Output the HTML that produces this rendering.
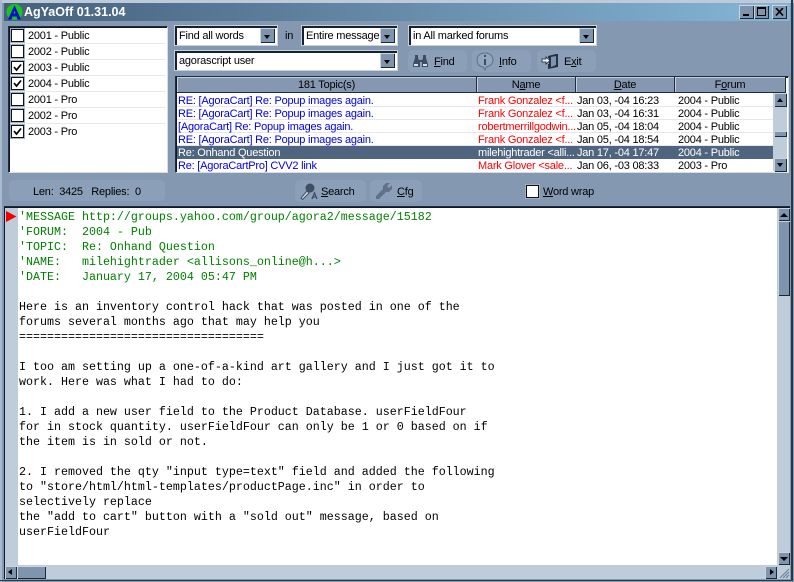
<!DOCTYPE html>
<html><head><meta charset="utf-8">
<style>
html,body{margin:0;padding:0;}
body{width:794px;height:582px;overflow:hidden;position:relative;background:#8499b1;font-family:"Liberation Sans",sans-serif;font-size:11px;letter-spacing:-.22px;color:#000;}
.a{position:absolute;white-space:pre;}
.inset{position:absolute;background:#fff;border:1px solid;border-color:#1f2c3d #d5dde6 #d5dde6 #1f2c3d;box-shadow:inset 1px 1px 0 #10192a;box-sizing:border-box;}
.cb{position:absolute;box-sizing:border-box;width:13px;height:13px;background:#fff;border:1px solid #111;box-shadow:0 0 0 1px #9fb0c4;}
.cb svg{position:absolute;left:1px;top:1px;}
.combo{position:absolute;box-sizing:border-box;background:#fff;border:1px solid #c4d0dc;outline:0;box-shadow:inset 1px 1px 0 #16202e,inset 2px 2px 0 #16202e;}
.combo span{position:absolute;left:4px;top:4px;white-space:pre;}
.arr{position:absolute;right:2px;top:2px;bottom:2px;width:15px;background:#7f94ad;box-shadow:inset 1px 1px 0 #c9d4df,inset -1px -1px 0 #1c2838;}
.arr:after{content:"";position:absolute;left:4px;top:7px;border:3.5px solid transparent;border-top:4px solid #000;border-bottom:0;}
.btn{position:absolute;background:#8ba0b8;border-radius:5px;height:22px;}
.btn .t{position:absolute;top:6px;white-space:pre;}
u{text-decoration:underline;}
.th{position:absolute;top:77px;height:16px;background:#8499b1;box-sizing:border-box;border-right:1px solid #1f2c3d;border-bottom:1px solid #1f2c3d;box-shadow:inset 1px 1px 0 #c4d0dc;text-align:center;line-height:16px;}
.row{position:absolute;left:177px;width:596px;height:13px;line-height:14px;border-bottom:1px solid #e4e8ec;box-sizing:border-box;}
.row span{position:absolute;top:0;white-space:pre;}
.c1{left:1px;color:#0000e0;}
.c2{left:301px;color:#f00;}
.c3{left:400px;}
.c4{left:501px;}
.sel{background:#4f657f;border:0;}
.sel span{color:#fff!important;}
.sb{position:absolute;background:#7f94ad;box-sizing:border-box;box-shadow:inset 1px 1px 0 #c9d4df,inset -1px -1px 0 #1c2838;}
.msg{position:absolute;left:19px;top:210px;font-family:"Liberation Mono",monospace;font-size:11.67px;letter-spacing:0;line-height:15px;white-space:pre;color:#000;}
.g{color:#008000;}
.li{position:absolute;left:10px;width:156px;height:16px;border-bottom:1px solid #e6e9ec;box-sizing:border-box;}
.li span{position:absolute;left:18px;top:2px;}
</style></head><body>

<!-- window frame -->
<div class="a" style="left:0;top:0;width:794px;height:3px;background:#bccad9"></div>
<div class="a" style="left:0;top:0;width:2px;height:582px;background:#a9bace"></div>
<div class="a" style="left:791px;top:0;width:2px;height:581px;background:#2a3848"></div>
<div class="a" style="left:0;top:580px;width:793px;height:1px;background:#2a3848"></div>

<!-- title bar -->
<div class="a" style="left:4px;top:3px;width:786px;height:18px;background:linear-gradient(90deg,#46607c,#85b6d6)"></div>
<svg class="a" style="left:5px;top:3px" width="20" height="18" viewBox="0 0 20 18">
<circle cx="9.5" cy="9" r="8" fill="#17c917"/>
<path d="M3 16.5 L9.5 2 L16 16.5 H12.5 L11.5 13.5 H7.5 L6.5 16.5 Z M8.5 10.500 H10.500 L9.500 7.500 Z" fill="#0a0ad8" fill-rule="evenodd"/>
</svg>
<div class="a" style="left:24px;top:4px;color:#fff;font-weight:bold;font-size:12.5px;line-height:16px;letter-spacing:0">AgYaOff 01.31.04</div>
<div class="sb" style="left:739px;top:5px;width:15px;height:14px"></div>
<div class="a" style="left:743px;top:14px;width:6px;height:2px;background:#000"></div>
<div class="sb" style="left:754px;top:5px;width:15px;height:14px"></div>
<div class="a" style="left:757px;top:7px;width:7px;height:6px;border:1px solid #000;border-top-width:2px"></div>
<div class="sb" style="left:772px;top:5px;width:15px;height:14px"></div>
<svg class="a" style="left:775px;top:8px" width="9" height="8"><path d="M1 0 L8 7.5 M8 0 L1 7.5" stroke="#000" stroke-width="1.6"/></svg>

<!-- forum list -->
<div class="inset" style="left:8px;top:26px;width:160px;height:147px"></div>
<div class="li" style="top:28px"><div class="cb" style="left:1px;top:1px"></div><span>2001 - Public</span></div>
<div class="li" style="top:44px"><div class="cb" style="left:1px;top:1px"></div><span>2002 - Public</span></div>
<div class="li" style="top:60px"><div class="cb" style="left:1px;top:1px"><svg width="9" height="9"><path d="M1 4 L3.500 7 L8 1.500" fill="none" stroke="#000" stroke-width="1.7"/></svg></div><span>2003 - Public</span></div>
<div class="li" style="top:76px"><div class="cb" style="left:1px;top:1px"><svg width="9" height="9"><path d="M1 4 L3.500 7 L8 1.500" fill="none" stroke="#000" stroke-width="1.7"/></svg></div><span>2004 - Public</span></div>
<div class="li" style="top:92px"><div class="cb" style="left:1px;top:1px"></div><span>2001 - Pro</span></div>
<div class="li" style="top:108px"><div class="cb" style="left:1px;top:1px"></div><span>2002 - Pro</span></div>
<div class="li" style="top:124px;border:0"><div class="cb" style="left:1px;top:1px"><svg width="9" height="9"><path d="M1 4 L3.500 7 L8 1.500" fill="none" stroke="#000" stroke-width="1.7"/></svg></div><span>2003 - Pro</span></div>

<!-- combos -->
<div class="combo" style="left:174px;top:25px;width:104px;height:21px"><span>Find all words</span><div class="arr"></div></div>
<div class="a" style="left:285px;top:30px">in</div>
<div class="combo" style="left:301px;top:25px;width:97px;height:21px"><span>Entire message</span><div class="arr"></div></div>
<div class="combo" style="left:408px;top:25px;width:189px;height:21px"><span>in All marked forums</span><div class="arr"></div></div>
<div class="combo" style="left:174px;top:50px;width:224px;height:21px"><span>agorascript user</span><div class="arr"></div></div>

<!-- buttons -->
<div class="btn" style="left:408px;top:50px;width:59px">
<svg class="a" style="left:4px;top:3px" width="17" height="16" viewBox="0 0 17 16"><path d="M3 2h3v3l1 2h3l1-2V2h3v3l2 6v3h-6V9H8v5H1v-3l2-6z" fill="#3f4f63"/><path d="M2 11h4v2H2zM11 11h4v2h-4z" fill="#d6dfe8"/></svg>
<span class="t" style="left:26px"><u>F</u>ind</span></div>
<div class="btn" style="left:472px;top:50px;width:59px">
<svg class="a" style="left:4px;top:2px" width="18" height="19" viewBox="0 0 18 19"><path d="M9 1C4 1 1 4 1 8s3 7 6 7l2 3 1-3c4-1 7-3 7-7s-3-7-8-7z" fill="#92a6bd" stroke="#5d7086"/><path d="M8 3h2v2H8zM8 7h2v6H8z" fill="#3f4f63"/></svg>
<span class="t" style="left:27px"><u>I</u>nfo</span></div>
<div class="btn" style="left:537px;top:50px;width:59px">
<svg class="a" style="left:4px;top:3px" width="18" height="17" viewBox="0 0 18 17"><path d="M7 3L15 1h2v13l-10 2V11h1V5H7z" fill="#26323f"/><path d="M10 4l5-1v9l-5 2z" fill="#7f94ad"/><path d="M1 6h4V4l4 3.500L5 11V9H1z" fill="#eef2f5" stroke="#1a2430" stroke-width=".8"/></svg>
<span class="t" style="left:27px">E<u>x</u>it</span></div>

<!-- topics table -->
<div class="inset" style="left:175px;top:76px;width:614px;height:97px"></div>
<div class="th" style="left:177px;width:300px">181 Topic(s)</div>
<div class="th" style="left:477px;width:99px">N<u>a</u>me</div>
<div class="th" style="left:576px;width:99px"><u>D</u>ate</div>
<div class="th" style="left:675px;width:111px">F<u>o</u>rum</div>

<div class="row" style="top:94px"><span class="c1">RE: [AgoraCart] Re: Popup images again.</span><span class="c2">Frank Gonzalez &lt;f...</span><span class="c3">Jan 03, -04 16:23</span><span class="c4">2004 - Public</span></div>
<div class="row" style="top:107px"><span class="c1">RE: [AgoraCart] Re: Popup images again.</span><span class="c2">Frank Gonzalez &lt;f...</span><span class="c3">Jan 03, -04 16:31</span><span class="c4">2004 - Public</span></div>
<div class="row" style="top:120px"><span class="c1">[AgoraCart] Re: Popup images again.</span><span class="c2">robertmerrillgodwin...</span><span class="c3">Jan 05, -04 18:04</span><span class="c4">2004 - Public</span></div>
<div class="row" style="top:133px"><span class="c1">RE: [AgoraCart] Re: Popup images again.</span><span class="c2">Frank Gonzalez &lt;f...</span><span class="c3">Jan 05, -04 18:54</span><span class="c4">2004 - Public</span></div>
<div class="row sel" style="top:146px"><span class="c1">Re: Onhand Question</span><span class="c2">milehightrader &lt;alli...</span><span class="c3">Jan 17, -04 17:47</span><span class="c4">2004 - Public</span></div>
<div class="row" style="top:159px;border:0"><span class="c1">Re: [AgoraCartPro] CVV2 link</span><span class="c2">Mark Glover &lt;sale...</span><span class="c3">Jan 06, -03 08:33</span><span class="c4">2003 - Pro</span></div>

<div class="a" style="left:773px;top:93px;width:14px;height:78px;background:#bfcddb"></div>
<div class="sb" style="left:774px;top:93px;width:13px;height:14px"></div>
<div class="a" style="left:777px;top:98px;border:3.500px solid transparent;border-bottom:4px solid #000;border-top:0"></div>
<div class="sb" style="left:774px;top:131px;width:13px;height:6px"></div>
<div class="sb" style="left:774px;top:158px;width:13px;height:14px"></div>
<div class="a" style="left:777px;top:163px;border:3.500px solid transparent;border-top:4px solid #000;border-bottom:0"></div>

<!-- status row -->
<div class="a" style="left:9px;top:180px;width:156px;height:21px;background:#8ba0b8;border-radius:5px"></div>
<div class="a" style="left:33px;top:186px">Len:  3425   Replies:  0</div>
<div class="btn" style="left:295px;top:180px;width:71px">
<svg class="a" style="left:4px;top:2px" width="20" height="19" viewBox="0 0 20 19"><circle cx="11" cy="6" r="4.500" fill="#3f4f63"/><path d="M8 9L2 16l1.500 1.500L10 11z" fill="#d6dfe8" stroke="#3f4f63"/><path d="M13 17l2.500-6 2.500 6M14 15h3" fill="none" stroke="#3f4f63" stroke-width="1.300"/></svg>
<span class="t" style="left:26px"><u>S</u>earch</span></div>
<div class="btn" style="left:370px;top:180px;width:52px">
<svg class="a" style="left:4px;top:2px" width="19" height="19" viewBox="0 0 19 19"><path d="M12 1h4l-3 3 2 2 3-3v4l-3 3h-3L5 17H2v-3l7-7V4z" fill="#5f7289"/></svg>
<span class="t" style="left:27px"><u>C</u>fg</span></div>

<div class="cb" style="left:526px;top:185px"></div>
<div class="a" style="left:543px;top:186px"><u>W</u>ord wrap</div>

<!-- editor -->
<div class="a" style="left:4px;top:206px;width:786px;height:1px;background:#1f2c3d"></div>
<div class="a" style="left:4px;top:207px;width:786px;height:372px;background:#fff;box-shadow:inset 1px 1px 0 #10192a"></div>
<div class="a" style="left:5px;top:208px;width:13px;height:357px;background:#bfcddb"></div>
<svg class="a" style="left:6px;top:211px" width="11" height="12"><path d="M0 0L10.500 5.500L0 11Z" fill="#f00000"/></svg>
<div class="msg"><span class="g">'MESSAGE http://groups.yahoo.com/group/agora2/message/15182
'FORUM:  2004 - Pub
'TOPIC:  Re: Onhand Question
'NAME:   milehightrader &lt;allisons_online@h...&gt;
'DATE:   January 17, 2004 05:47 PM</span>

Here is an inventory control hack that was posted in one of the
forums several months ago that may help you
===================================

I too am setting up a one-of-a-kind art gallery and I just got it to
work. Here was what I had to do:

1. I add a new user field to the Product Database. userFieldFour
for in stock quantity. userFieldFour can only be 1 or 0 based on if
the item is in sold or not.

2. I removed the qty "input type=text" field and added the following
to "store/html/html-templates/productPage.inc" in order to
selectively replace
the "add to cart" button with a "sold out" message, based on
userFieldFour</div>

<!-- editor scrollbars -->
<div class="a" style="left:777px;top:208px;width:13px;height:357px;background:#bfcddb"></div>
<div class="sb" style="left:778px;top:208px;width:12px;height:13px"></div>
<div class="a" style="left:780px;top:213px;border:4px solid transparent;border-bottom:4px solid #000;border-top:0"></div>
<div class="sb" style="left:778px;top:221px;width:12px;height:75px"></div>
<div class="sb" style="left:778px;top:552px;width:12px;height:13px"></div>
<div class="a" style="left:780px;top:557px;border:4px solid transparent;border-top:4px solid #000;border-bottom:0"></div>

<div class="a" style="left:5px;top:565px;width:785px;height:14px;background:#bfcddb"></div>
<div class="sb" style="left:5px;top:566px;width:12px;height:13px"></div>
<div class="a" style="left:8px;top:569px;border:3.500px solid transparent;border-right:4px solid #000;border-left:0"></div>
<div class="sb" style="left:17px;top:566px;width:29px;height:13px"></div>
<div class="sb" style="left:765px;top:566px;width:12px;height:13px"></div>
<div class="a" style="left:770px;top:569px;border:3.500px solid transparent;border-left:4px solid #000;border-right:0"></div>
<svg class="a" style="left:778px;top:567px" width="12" height="12"><path d="M11 2L2 11M11 5L5 11M11 8L8 11" stroke="#6e8198" stroke-width="1.200"/></svg>
</body></html>
